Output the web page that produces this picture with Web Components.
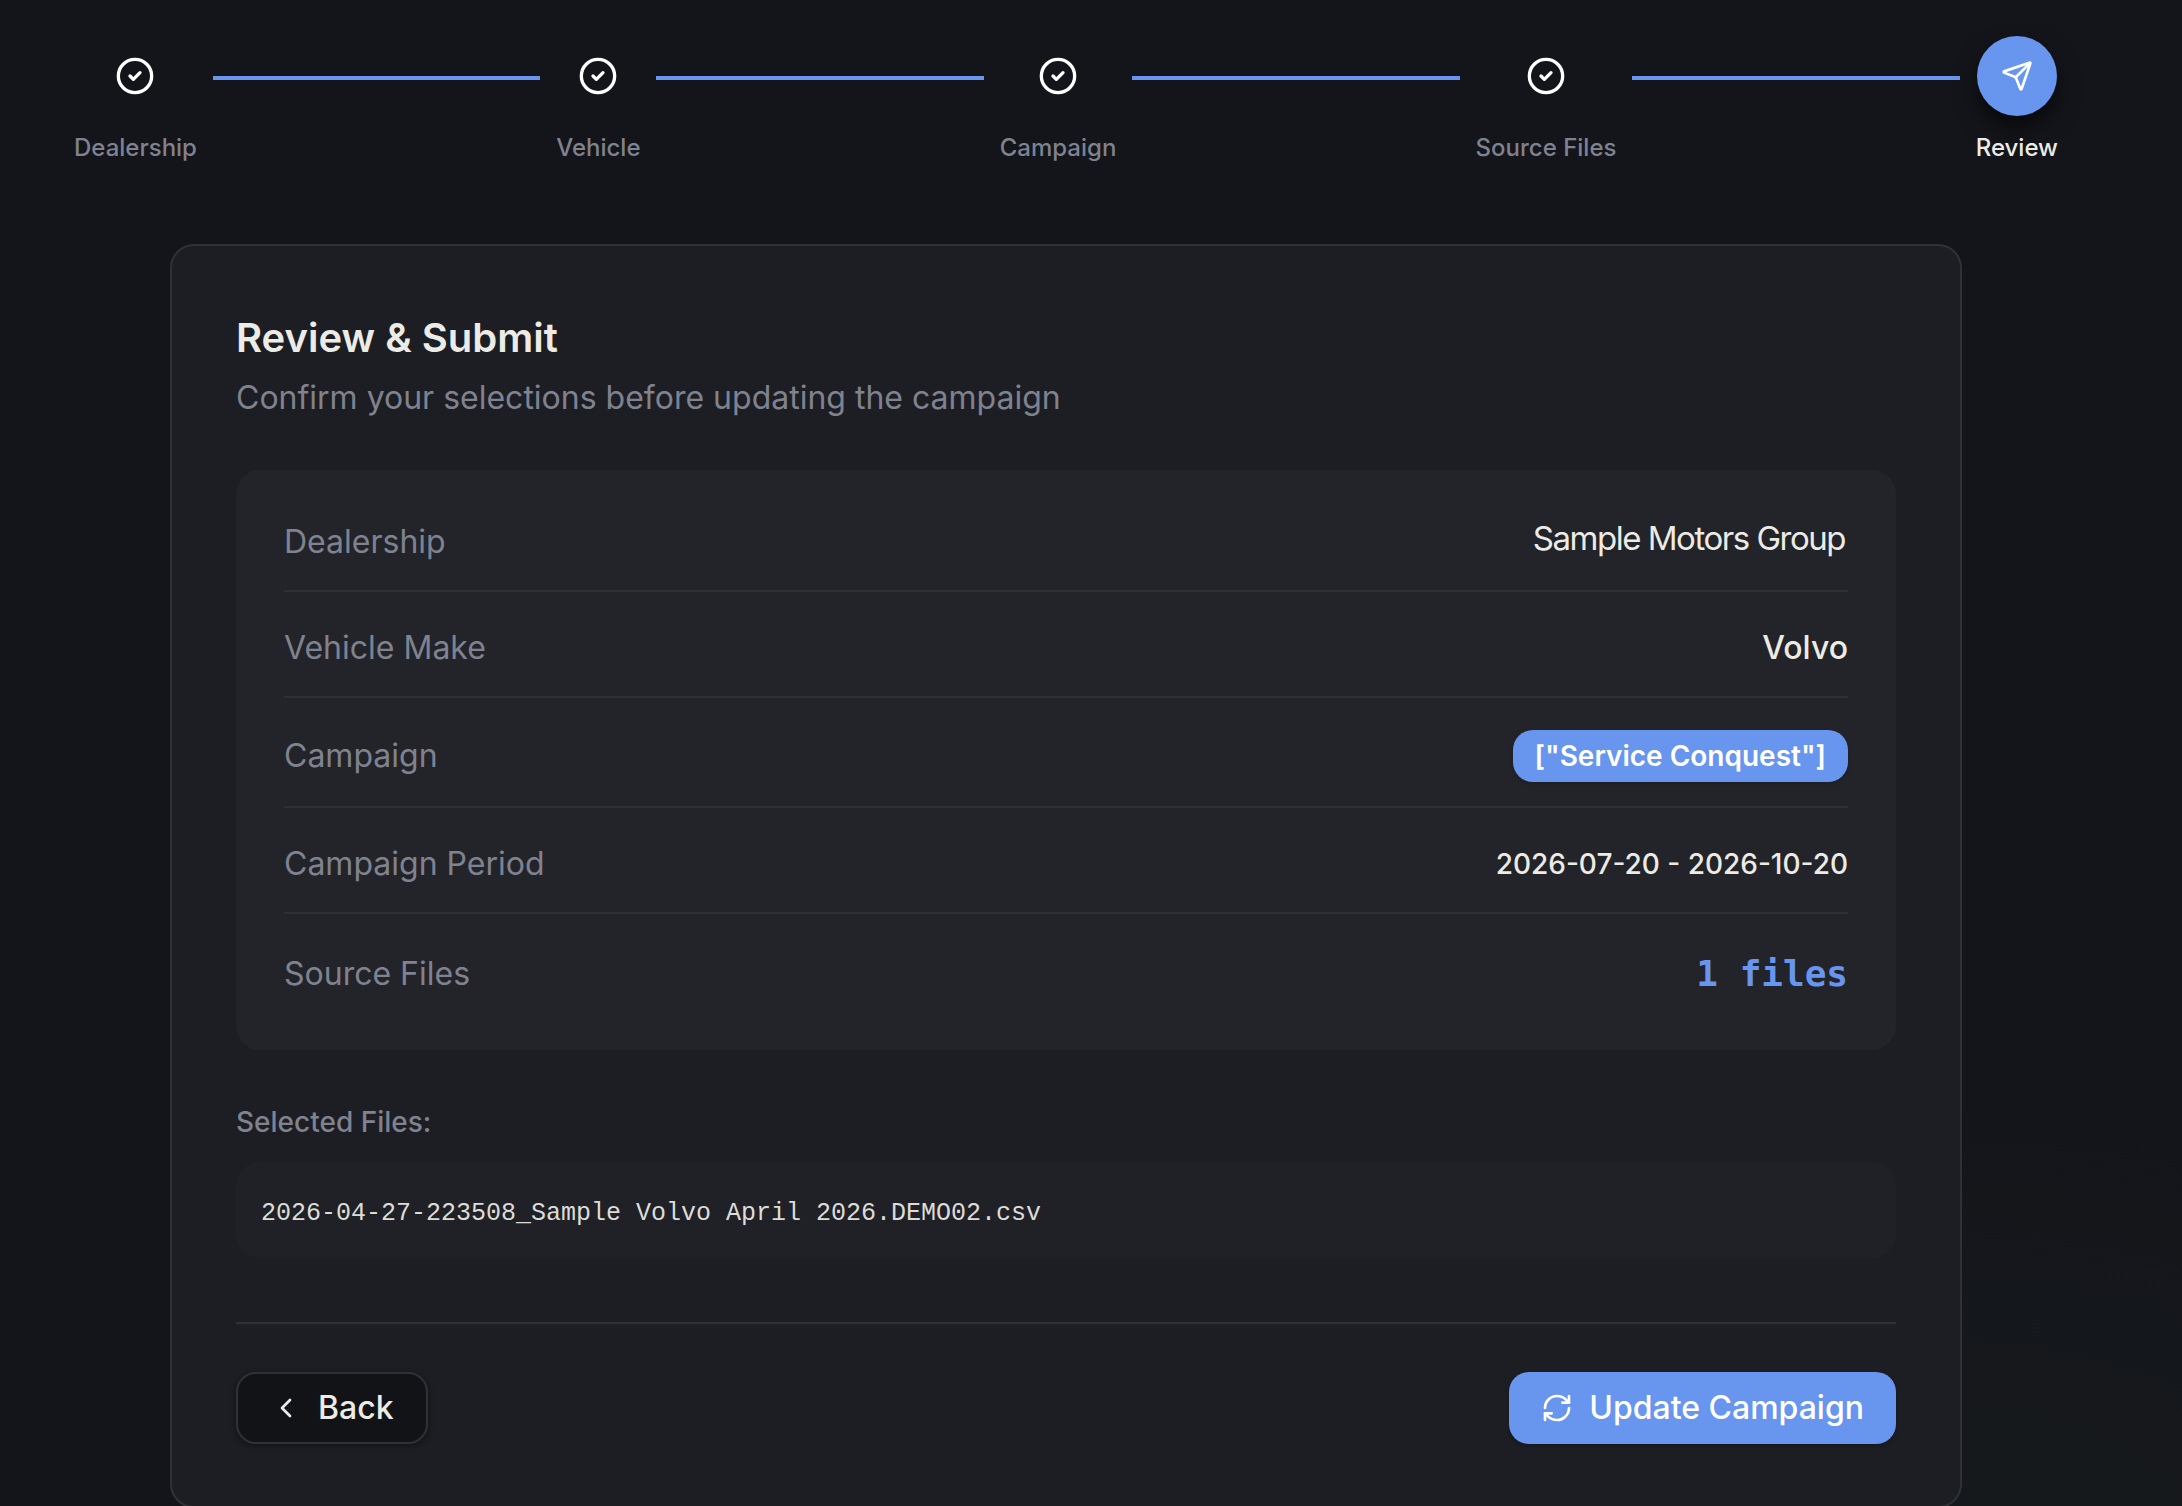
<!DOCTYPE html>
<html lang="en">
<head>
<meta charset="utf-8">
<title>Review &amp; Submit</title>
<style>
html,body{margin:0;height:100%;overflow:hidden}
body{background:radial-gradient(ellipse 900px 460px at 1900px 1560px,#16191c 0%,rgba(21,24,28,.75) 55%,rgba(20,21,26,0) 100%),#14151a;font-family:Inter,"Liberation Sans",sans-serif}
</style>
</head>
<body>
<campaign-wizard></campaign-wizard>
<script>
const ICONS = {
  check: '<circle cx="12" cy="12" r="10"/><path d="m9 12 2 2 4-4"/>',
  send: '<path d="M14.536 21.686a.5.5 0 0 0 .937-.024l6.5-19a.496.496 0 0 0-.635-.635l-19 6.5a.5.5 0 0 0-.024.937l7.93 3.18a2 2 0 0 1 1.112 1.11z"/><path d="m21.854 2.147-10.94 10.939"/>',
  back: '<path d="m15 18-6-6 6-6"/>',
  refresh: '<path d="M3 12a9 9 0 0 1 9-9 9.75 9.75 0 0 1 6.74 2.74L21 8"/><path d="M21 3v5h-5"/><path d="M21 12a9 9 0 0 1-9 9 9.75 9.75 0 0 1-6.74-2.74L3 16"/><path d="M8 16H3v5"/>'
};
function define(name, render) {
  customElements.define(name, class extends HTMLElement {
    constructor() { super(); this.attachShadow({ mode: 'open' }); }
    connectedCallback() { this.shadowRoot.innerHTML = render(this); }
  });
}
define('ui-icon', el => `<style>:host{display:block;flex:none}svg{display:block}</style>
<svg width="${el.getAttribute('size')}" height="${el.getAttribute('size')}" viewBox="0 0 24 24" fill="none" stroke="currentColor" stroke-width="2" stroke-linecap="round" stroke-linejoin="round">${ICONS[el.getAttribute('name')]}</svg>`);

define('wizard-step', el => `<style>
:host{display:flex;flex-direction:column;align-items:center;gap:16px;flex:none;color:#7f828f}
:host([active]){color:#ecebe6}
.dot{display:grid;place-items:center;width:80px;height:80px;border-radius:50%;color:#fff}
:host([active]) .dot{background:#6895ee;box-shadow:0 12px 26px -4px rgba(0,0,0,.8)}
.label{font-size:24px;line-height:32px;font-weight:500;white-space:nowrap}
</style><div class="dot"><ui-icon name="${el.hasAttribute('active') ? 'send' : 'check'}" size="${el.hasAttribute('active') ? 32 : 40}"></ui-icon></div><span class="label"><slot></slot></span>`);

define('step-line', () => `<style>:host{display:block;flex:1;height:4px;margin:40px 16px 0;background:#6895ee}</style>`);

define('wizard-stepper', () => `<style>:host{display:flex;align-items:flex-start;padding:36px 124px 0 74px}</style><slot></slot>`);

define('review-row', () => `<style>
:host{display:flex;justify-content:space-between;align-items:center;min-height:48px;padding-bottom:24px;border-bottom:2px solid #2f3036;font-size:32px;line-height:48px}
:host([last]){border:0;padding:0;min-height:56px}
.k{color:#7f828f}
.v{display:flex;color:#ecebe6;font-weight:500;white-space:nowrap}
</style><span class="k"><slot name="label"></slot></span><span class="v"><slot></slot></span>`);

define('ui-badge', () => `<style>:host{display:block;box-sizing:border-box;height:52px;padding:0 22px;border-radius:20px;background:#6895ee;color:#fff;font-size:28px;line-height:52px;font-weight:600;box-shadow:0 2px 4px rgba(0,0,0,.15)}</style><slot></slot>`);

define('review-panel', () => `<style>:host{display:flex;flex-direction:column;gap:32px;padding:48px;border-radius:24px;background:#232429}</style><slot></slot>`);

define('file-list', () => `<style>:host{display:block;margin-top:48px}
.t{display:block;padding-top:1px;font-size:28px;line-height:47px;font-weight:500;color:#7f828f}
.b{display:flex;align-items:center;height:96px;box-sizing:border-box;margin-top:16px;padding:7px 25px 0;border-radius:24px;background:#202126;color:#dddcd8;font:25px/40px "Liberation Mono",monospace}
</style><span class="t">Selected Files:</span><div class="b"><slot></slot></div>`);

define('ui-button', el => `<style>:host{display:block}
button{display:flex;align-items:center;gap:16px;box-sizing:border-box;height:72px;padding:0 32px;border:0;border-radius:20px;background:#6895ee;color:#fff;font:500 32px/48px Inter,sans-serif;box-shadow:0 2px 4px rgba(0,0,0,.2)}
:host([outline]) button{background:#121317;border:2px solid #303138;color:#ecebe6;box-shadow:0 2px 6px rgba(0,0,0,.4)}
</style><button><ui-icon name="${el.getAttribute('icon')}" size="32"></ui-icon><span><slot></slot></span></button>`);

define('review-card', () => `<style>
:host{display:block;box-sizing:border-box;width:1792px;height:1264px;margin:80px 0 0 170px;padding:64px;border:2px solid #303138;border-radius:24px;background:#1d1e23}
h1{margin:0;font-size:40px;line-height:56px;font-weight:600;color:#ecebe6}
p{margin:8px 0 48px;font-size:32px;line-height:48px;color:#7f828f}
footer{display:flex;justify-content:space-between;margin-top:64px;padding-top:48px;border-top:2px solid #303138}
</style><h1>Review &amp; Submit</h1><p>Confirm your selections before updating the campaign</p><slot></slot><footer><slot name="actions"></slot></footer>`);

define('campaign-wizard', () => `<style>
:host{display:block;height:100vh;overflow:hidden}
.dealer{font-weight:400;font-size:33px;line-height:40px;letter-spacing:-1.48px;padding:0 3px 8px 0}
.period{font-size:28px}
.count{font:bold 36px/56px "DejaVu Sans Mono",monospace;color:#6895ee}
</style>
<wizard-stepper>
<wizard-step>Dealership</wizard-step><step-line></step-line><wizard-step>Vehicle</wizard-step><step-line></step-line><wizard-step>Campaign</wizard-step><step-line></step-line><wizard-step>Source Files</wizard-step><step-line></step-line><wizard-step active>Review</wizard-step>
</wizard-stepper>
<review-card>
<review-panel>
<review-row><span slot="label">Dealership</span><span class="dealer">Sample Motors Group</span></review-row>
<review-row><span slot="label">Vehicle Make</span><span>Volvo</span></review-row>
<review-row><span slot="label">Campaign</span><ui-badge>["Service Conquest"]</ui-badge></review-row>
<review-row><span slot="label">Campaign Period</span><span class="period">2026-07-20 - 2026-10-20</span></review-row>
<review-row last><span slot="label">Source Files</span><span class="count">1 files</span></review-row>
</review-panel>
<file-list>2026-04-27-223508_Sample Volvo April 2026.DEMO02.csv</file-list>
<ui-button slot="actions" outline icon="back">Back</ui-button><ui-button slot="actions" icon="refresh">Update Campaign</ui-button>
</review-card>`);
</script>
</body>
</html>
